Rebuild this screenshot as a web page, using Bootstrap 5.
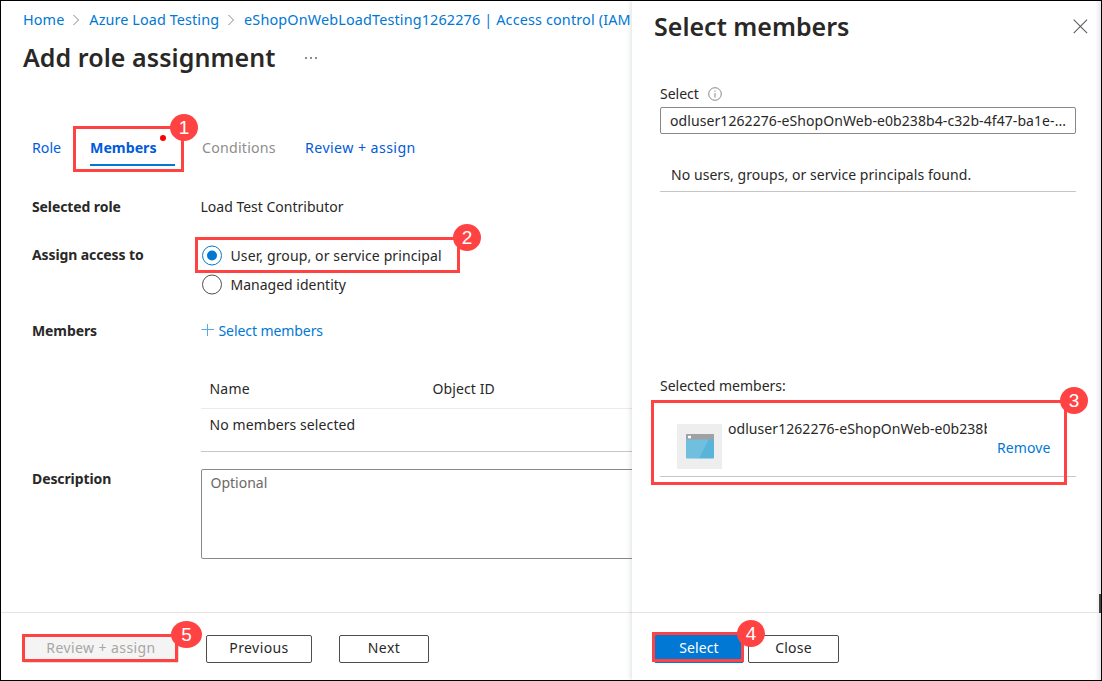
<!DOCTYPE html>
<html lang="en">
<head>
<meta charset="utf-8">
<meta name="viewport" content="width=device-width, initial-scale=1">
<title>Add role assignment</title>
<link href="https://cdn.jsdelivr.net/npm/bootstrap@5.3.0/dist/css/bootstrap.min.css" rel="stylesheet">
<style>
:root{--azure:#0078d4;--ink:#292827;--callout:#ff4343}
body{font-family:"Noto Sans","Open Sans",sans-serif;font-size:14px;line-height:20px;color:var(--ink);background:#fff}
a{color:var(--azure);text-decoration:none}
svg{display:block;flex:none}
.sp-1{letter-spacing:.1px}
.sp-2{letter-spacing:.22px}
.sp-4{letter-spacing:.42px}
.shell{width:1102px;height:681px;border:1px solid #000}
.main-pane{width:631px;white-space:nowrap}
.side-pane{width:469px;white-space:nowrap;background:#fff;box-shadow:-1px 0 5px rgba(90,120,110,.22);z-index:2}
.side-pane::after{content:"";position:absolute;right:0;top:0;bottom:0;width:6px;background:linear-gradient(90deg,rgba(255,255,255,0),#e9e9ee)}
.scroll-stub{position:absolute;right:0;top:593px;width:2px;height:19px;background:#444;z-index:3}

/* blade header */
.crumbs{height:38px;padding:0 0 0 22px;font-size:14.4px}
.crumbs .chev{margin:0 9px 0 8px}
h1,h2{font-size:25px;font-weight:600;line-height:36px;margin:0}
.title-row{height:36px;padding-left:22px}
.title-row h1{letter-spacing:.06px}
.tabs-row{margin-top:63px;padding-left:31px;height:20px}
.tabs-row .tab-link{color:#015cda;font-size:14.2px}
.tabs-row .tab-off{color:#8f8d8b;font-size:14.2px}
.tab-active::after{content:"";position:absolute;left:0;top:26px;width:85px;height:2px;background:var(--azure)}
.tab-dot{position:absolute;left:70px;top:-3px;width:6px;height:6px;border-radius:50%;background:#f00}

/* form */
.form-area{padding:39px 0 0 31px}
.lbl{width:168.5px;font-weight:700;flex:none;letter-spacing:-.1px}
.opt svg{margin-right:9px}
.member-grid{width:470px;margin-top:28px}
.grid-head{height:40px;border-bottom:1px solid #edebe9;padding:10px 0 0 9px}
.grid-head span:first-child{width:223px}
.grid-body{height:43px;border-bottom:1px solid #c8c6c4;padding:6px 0 0 9px}
.desc-box{height:90px;width:470px;flex:none;border:1px solid #8a8886;border-radius:2px;padding:3px 0 0 9px;color:#6b6966}

/* footers and buttons */
.foot{height:68px;border-top:1px solid #e9e2dd;padding-top:22px}
.az-btn{height:28px;border:1px solid #504e4b;border-radius:2px;background:#fff;color:var(--ink);padding:0 0 2px;font-size:14px;line-height:24px}
.az-btn.off{border-color:#dcdcdc;background:#f4f4f4;color:#a9a6a3}
.az-btn.go{background:var(--azure);border-color:var(--azure);color:#fff}

/* member picker */
.side-body{padding-left:28px}
.field{width:416px;height:27px;border:1px solid #8a8886;border-radius:2px;padding:3px 0 0 9px}
.rule-row{width:416px;border-bottom:1px solid #c8c6c4}
.app-tile{width:45px;height:45px;background:#eee}
.member-name{width:259px;overflow:hidden}

/* numbered callouts laid over the page */
.callout-box{position:absolute;border:3px solid var(--callout);pointer-events:none;z-index:3}
.callout-num{position:absolute;width:28px;height:27px;border-radius:50%;background:var(--callout);color:#fff;font:19px/27px "Liberation Sans",Arial,sans-serif;text-align:center;z-index:4}
</style>
<script src="https://cdn.jsdelivr.net/npm/bootstrap@5.3.0/dist/js/bootstrap.bundle.min.js"></script>
</head>
<body>
<div class="shell d-flex overflow-hidden position-relative">
 <main class="main-pane d-flex flex-column overflow-hidden flex-shrink-0">
  <nav class="crumbs d-flex align-items-center">
   <a href="#" class="sp-1">Home</a>
   <svg class="chev" width="8" height="12" viewBox="0 0 8 12"><path d="M1.500 1l5 5-5 5" fill="none" stroke="#8a8886"/></svg>
   <a href="#" class="sp-1">Azure Load Testing</a>
   <svg class="chev" width="8" height="12" viewBox="0 0 8 12"><path d="M1.500 1l5 5-5 5" fill="none" stroke="#8a8886"/></svg>
   <a href="#" style="letter-spacing:.15px">eShopOnWebLoadTesting1262276 | Access control (IAM</a>
  </nav>
  <div class="title-row d-flex">
   <h1>Add role assignment</h1>
   <svg style="margin:16px 0 0 25px" width="22" height="6" viewBox="0 0 22 6"><path d="M5 2h2v2H5zM10 2h2v2h-2zM15 2h2v2h-2z" fill="#8f8d8b"/></svg>
  </div>
  <div class="tabs-row d-flex">
   <a href="#" class="tab-link" style="width:58px">Role</a>
   <a href="#" class="tab-link tab-active fw-bold position-relative" style="width:112px">Members<i class="tab-dot"></i></a>
   <span class="tab-off sp-2" style="width:103px">Conditions</span>
   <a href="#" class="tab-link sp-4">Review + assign</a>
  </div>
  <div class="form-area flex-grow-1">
   <div class="d-flex"><span class="lbl">Selected role</span><span>Load Test Contributor</span></div>
   <div class="d-flex" style="margin-top:28px">
    <span class="lbl">Assign access to</span>
    <div>
     <div class="opt d-flex align-items-center" style="letter-spacing:.12px"><svg width="21" height="21" viewBox="0 0 21 21"><circle cx="11" cy="10.500" r="9.500" fill="#fff" stroke="#0078d4"/><circle cx="11" cy="10.500" r="5" fill="#0078d4"/></svg>User, group, or service principal</div>
     <div class="opt d-flex align-items-center" style="margin-top:8px"><svg width="21" height="21" viewBox="0 0 21 21"><circle cx="11" cy="10.500" r="9.500" fill="#fff" stroke="#504e4b"/></svg>Managed identity</div>
    </div>
   </div>
   <div class="d-flex" style="margin-top:26px">
    <span class="lbl">Members</span>
    <div>
     <a href="#" class="d-flex align-items-center"><svg class="me-1" width="14" height="14" viewBox="0 0 14 14"><path d="M.5 5.500h12.500M6.500 0v12" fill="none" stroke="#5ea6e4"/></svg><span style="letter-spacing:-.08px">Select members</span></a>
     <div class="member-grid">
      <div class="grid-head d-flex"><span class="sp-2">Name</span><span class="sp-1">Object ID</span></div>
      <div class="grid-body sp-1">No members selected</div>
     </div>
    </div>
   </div>
   <div class="d-flex" style="margin-top:17px"><span class="lbl">Description</span><div class="desc-box">Optional</div></div>
  </div>
  <div class="foot d-flex">
   <button class="btn az-btn off sp-4" style="width:156px;margin-left:22px">Review + assign</button>
   <button class="btn az-btn sp-4" style="width:106px;margin-left:27px">Previous</button>
   <button class="btn az-btn sp-4" style="width:90px;margin-left:27px">Next</button>
  </div>
 </main>

 <aside class="side-pane d-flex flex-column position-relative flex-shrink-0">
  <div class="d-flex justify-content-between" style="padding:7px 13px 0 22px">
   <h2>Select members</h2>
   <svg style="margin-top:11px" width="15" height="15" viewBox="0 0 15 15"><path d="M.7.7l13.400 13.400M14.100.7L.7 14.100" fill="none" stroke="#605e5c" stroke-width="1.1"/></svg>
  </div>
  <div class="side-body flex-grow-1">
   <div class="d-flex align-items-center" style="margin-top:40px">Select
    <svg style="margin-left:9px" width="14" height="14" viewBox="0 0 14 14"><circle cx="7" cy="7" r="6.300" fill="none" stroke="#8a8886"/><path d="M7 6v4.500M7 3.600v1.200" stroke="#8a8886" fill="none"/></svg>
   </div>
   <div class="field" style="margin-top:3px;letter-spacing:.08px">odluser1262276-eShopOnWeb-e0b238b4-c32b-4f47-ba1e-...</div>
   <div class="rule-row" style="margin-top:31px;height:27px;padding-left:11px;letter-spacing:.06px">No users, groups, or service principals found.</div>
   <div style="margin-top:184px">Selected members:</div>
   <div class="rule-row d-flex" style="height:81px;padding:28px 0 0 17px">
    <div class="app-tile d-flex align-items-center justify-content-center">
     <svg width="28" height="25" viewBox="0 0 28 25"><rect width="28" height="24.500" rx="1" fill="#59b4d9"/><path d="M1 0h26a1 1 0 0 1 1 1v4.500H0V1a1 1 0 0 1 1-1z" fill="#a0a1a2"/><path d="M0 5.500h22.500L13 24.500H1a1 1 0 0 1-1-1z" fill="#fff" opacity=".15"/><rect x="2" y="1.800" width="3" height="2.500" fill="#fff"/></svg>
    </div>
    <div class="member-name" style="margin:-5px 0 0 6px;letter-spacing:.06px">odluser1262276-eShopOnWeb-e0b238b</div>
    <a href="#" class="sp-1" style="margin:14px 0 0 10px">Remove</a>
   </div>
  </div>
  <div class="foot d-flex">
   <button class="btn az-btn go sp-1" style="width:90px;margin-left:22px">Select</button>
   <button class="btn az-btn sp-2" style="width:91px;margin-left:4px">Close</button>
  </div>
 </aside>

 <div class="scroll-stub"></div>

 <div class="callout-box" style="left:72px;top:125px;width:111px;height:46px"></div>
 <div class="callout-num" style="left:169px;top:113px">1</div>
 <div class="callout-box" style="left:194px;top:236px;width:265px;height:36px"></div>
 <div class="callout-num" style="left:452px;top:223px">2</div>
 <div class="callout-box" style="left:650px;top:399px;width:416px;height:85px"></div>
 <div class="callout-num" style="left:1059px;top:386px">3</div>
 <div class="callout-box" style="left:651px;top:631px;width:92px;height:30px"></div>
 <div class="callout-num" style="left:736px;top:619px">4</div>
 <div class="callout-box" style="left:21px;top:633px;width:156px;height:28px"></div>
 <div class="callout-num" style="left:170px;top:620px;width:31px">5</div>
</div>
</body>
</html>
